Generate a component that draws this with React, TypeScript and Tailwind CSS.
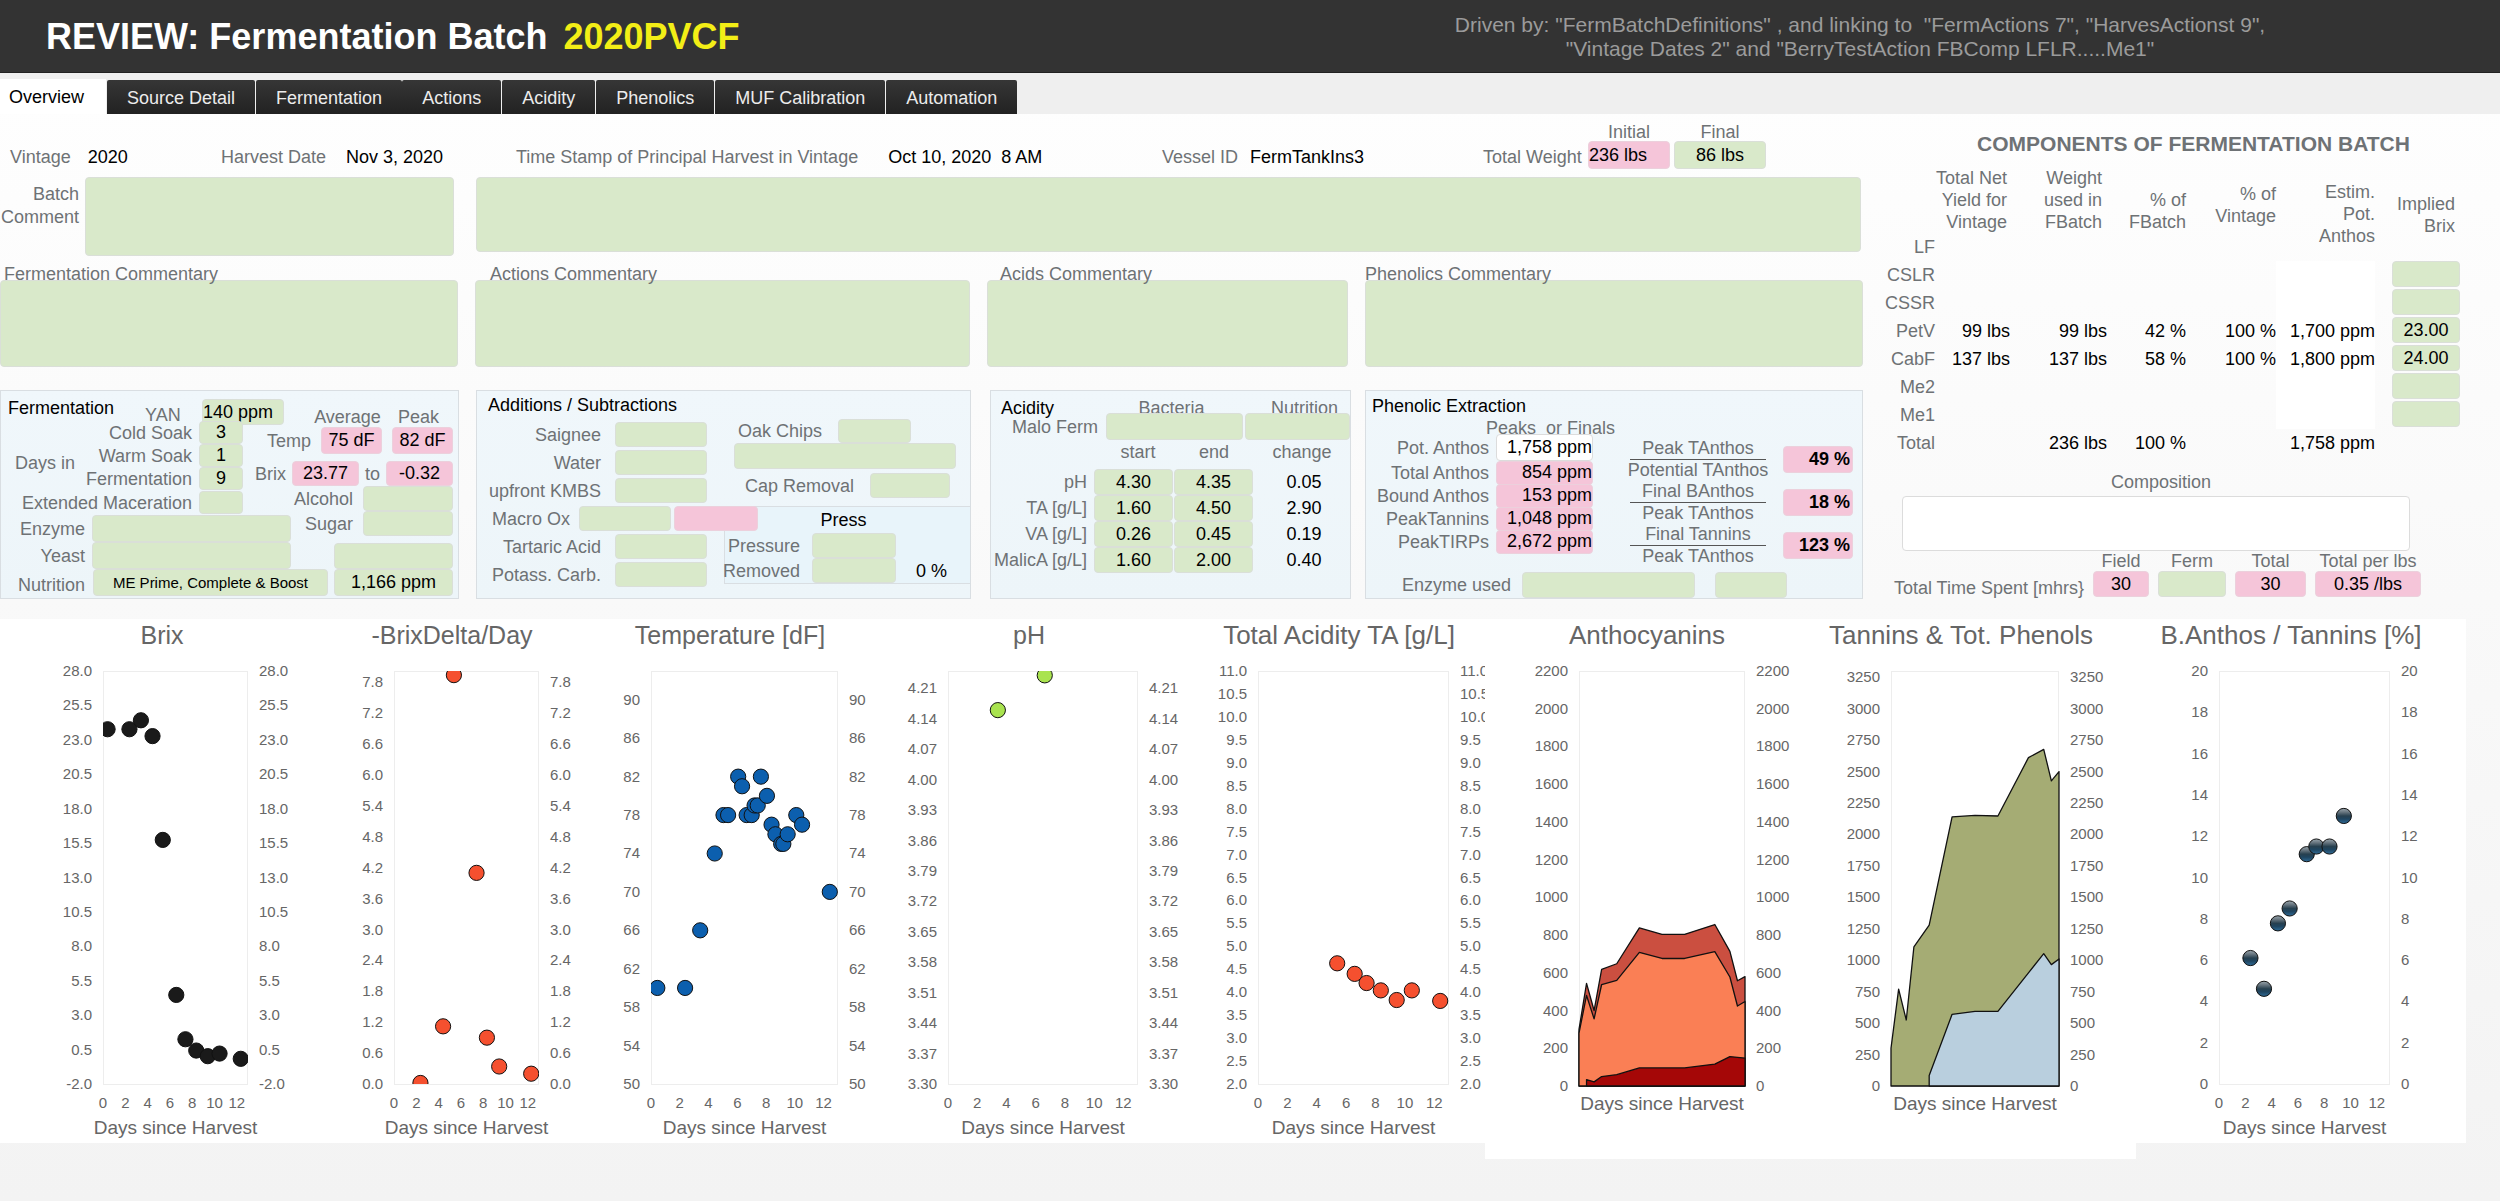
import { useId } from "react";
import type { ReactNode } from "react";
import clsx from "clsx";

type Tone = "green" | "pink" | "white";

const tones: Record<Tone, string> = {
  green: "bg-[#d9e9ca] border-[#dadfd8]",
  pink: "bg-[#f5c5d9] border-[#ecd0dc]",
  white: "bg-white border-[#dcdcdc]",
};

type BoxProps = {
  id?: string;
  label?: string;
  value?: string;
  tone?: Tone;
  className?: string;
};

function Box({ id, label, value = "", tone = "green", className }: BoxProps) {
  return (
    <input
      id={id}
      aria-label={label}
      defaultValue={value}
      className={clsx("min-w-0 shrink-0 rounded border text-black outline-none", tones[tone], className)}
    />
  );
}

function Label({ htmlFor, className, children }: { htmlFor: string; className?: string; children: ReactNode }) {
  return (
    <label htmlFor={htmlFor} className={clsx("whitespace-nowrap", className)}>
      {children}
    </label>
  );
}

function Panel({ className, children }: { className?: string; children: ReactNode }) {
  return (
    <section className={clsx("h-[209px] min-w-0 border border-[#d9dee2] bg-gradient-to-b from-[#f0f7fb] to-[#edf5f9]", className)}>
      {children}
    </section>
  );
}

/* ---------- header and tabs ---------- */

const tabs = ["Source Detail", "Fermentation", "Actions", "Acidity", "Phenolics", "MUF Calibration", "Automation"];

function Header() {
  return (
    <header className="flex h-[73px] items-center border-b border-[#222] bg-[#333] pt-0.5 pl-[46px]">
      <h1 className="flex-[1406] text-4xl font-bold whitespace-nowrap text-white">
        REVIEW: Fermentation Batch <span className="ml-1.5 text-[#f3ee16]">2020PVCF</span>
      </h1>
      <p className="flex-[816] text-center text-[21px] leading-6 whitespace-pre text-[#9b9b9b]">
        {'Driven by: "FermBatchDefinitions" , and linking to  "FermActions 7", "HarvesActionst 9",\n"Vintage Dates 2" and "BerryTestAction FBComp LFLR.....Me1"'}
      </p>
      <div className="flex-[232]" />
    </header>
  );
}

function Tabs() {
  return (
    <nav className="flex h-[41px] items-end bg-[#efefef]">
      <button type="button" className="h-[35px] bg-white pr-[22px] pl-[9px] text-black">
        Overview
      </button>
      {tabs.map((tab) => (
        <button
          key={tab}
          type="button"
          className={clsx(
            "h-[34px] rounded-t-xs bg-gradient-to-b from-[#363636] to-[#222] px-5 pt-0.5 text-[#ececec]",
            tab !== "Actions" && "ml-px"
          )}
        >
          {tab}
        </button>
      ))}
    </nav>
  );
}

/* ---------- batch information ---------- */

function Info({ label, value, gap }: { label: string; value: string; gap: string }) {
  return (
    <div className={clsx("flex leading-6 whitespace-nowrap", gap)}>
      <span>{label}</span>
      <span className="text-black">{value}</span>
    </div>
  );
}

function BatchInfo() {
  return (
    <div className="grid h-[63px] grid-cols-[211fr_295fr_646fr_321fr_380fr] items-end pb-2 pl-2.5">
      <Info label="Vintage" value="2020" gap="gap-[17px]" />
      <Info label="Harvest Date" value="Nov 3, 2020" gap="gap-5" />
      <Info label="Time Stamp of Principal Harvest in Vintage" value={"Oct 10, 2020 \u00a08 AM"} gap="gap-[30px]" />
      <Info label="Vessel ID" value="FermTankIns3" gap="gap-3" />
      <div className="flex items-end">
        <span className="w-[105px] leading-6 whitespace-nowrap">Total Weight</span>
        <div className="flex flex-col items-center">
          <Label htmlFor="w-initial" className="leading-[18px]">Initial</Label>
          <Box id="w-initial" value="236 lbs" tone="pink" className="h-7 w-[82px]" />
        </div>
        <div className="ml-1 flex flex-col items-center">
          <Label htmlFor="w-final" className="leading-[18px]">Final</Label>
          <Box id="w-final" value="86 lbs" className="h-7 w-[92px] text-center" />
        </div>
      </div>
    </div>
  );
}

function BatchComment() {
  return (
    <div className="flex items-start pr-0.5">
      <label htmlFor="batch-comment" className="w-[79px] shrink-0 pt-1.5 text-right leading-[23px]">
        Batch Comment
      </label>
      <textarea id="batch-comment" className="ml-1.5 h-[79px] min-w-0 flex-[368] resize-none rounded border border-[#dadfd8] bg-[#d9e9ca]" />
      <textarea aria-label="Harvest comment" className="ml-[22px] h-[75px] min-w-0 flex-[1385] resize-none rounded border border-[#dadfd8] bg-[#d9e9ca]" />
    </div>
  );
}

function Commentary({ title, pad }: { title: string; pad: string }) {
  const id = useId();
  return (
    <div className="flex flex-col">
      <label htmlFor={id} className={clsx("relative z-10 mt-1.5 -mb-1.5 leading-6", pad)}>
        {title}
      </label>
      <textarea id={id} className="h-[87px] w-full resize-none rounded border border-[#dadfd8] bg-[#d9e9ca]" />
    </div>
  );
}

/* ---------- fermentation ---------- */

const soaks = [
  { label: "Cold Soak", value: "3" },
  { label: "Warm Soak", value: "1" },
  { label: "Fermentation", value: "9" },
  { label: "Extended Maceration", value: "" },
];

function FermentationPanel() {
  return (
    <Panel className="pr-[5px]">
      <div className="flex">
        <div className="w-[290px] shrink-0">
          <div className="-mb-1 flex pt-2">
            <h2 className="w-[144px] pl-[7px] leading-[18px] text-black">Fermentation</h2>
            <Label htmlFor="yan" className="w-[57px] pt-1.5 leading-5">YAN</Label>
            <Box id="yan" value="140 ppm" className="h-[26px] w-[82px]" />
          </div>
          <div className="flex">
            <span className="self-center pb-2.5 pl-[14px]">Days in</span>
            <div className="-ml-16 flex flex-1 flex-col items-end pr-[48px]">
              {soaks.map((s) => (
                <div key={s.label} className="flex items-center gap-[7px] last:h-[25px]">
                  <Label htmlFor={"soak-" + s.label}>{s.label}</Label>
                  <Box id={"soak-" + s.label} value={s.value} className="h-[23px] w-11 text-center" />
                </div>
              ))}
            </div>
          </div>
          <div className="flex items-center gap-[7px]">
            <Label htmlFor="enzyme" className="w-[84px] text-right">Enzyme</Label>
            <Box id="enzyme" className="h-[27px] flex-1" />
          </div>
          <div className="flex items-center gap-[7px]">
            <Label htmlFor="yeast" className="w-[84px] text-right">Yeast</Label>
            <Box id="yeast" className="h-[27px] flex-1" />
          </div>
        </div>
        <div className="flex min-w-0 flex-1 flex-col items-end pt-4">
          <div className="flex gap-2.5 pr-1 leading-5">
            <span className="flex w-[61px] justify-center">Average</span>
            <span className="flex w-[61px] justify-center">Peak</span>
          </div>
          <div className="flex items-center gap-2.5">
            <span>Temp</span>
            <Box label="Average temperature" value="75 dF" tone="pink" className="h-[27px] w-[61px] text-center" />
            <Box label="Peak temperature" value="82 dF" tone="pink" className="h-[27px] w-[61px] text-center" />
          </div>
          <div className="mt-[7px] flex items-center gap-1.5">
            <span>Brix</span>
            <Box label="Brix from" value="23.77" tone="pink" className="h-[25px] w-[67px] text-center" />
            <span>to</span>
            <Box label="Brix to" value="-0.32" tone="pink" className="h-[25px] w-[67px] text-center" />
          </div>
          <div className="flex items-center gap-2.5">
            <Label htmlFor="alcohol">Alcohol</Label>
            <Box id="alcohol" className="h-[25px] w-[90px]" />
          </div>
          <div className="flex items-center gap-2.5">
            <Label htmlFor="sugar">Sugar</Label>
            <Box id="sugar" className="h-[25px] w-[90px]" />
          </div>
          <Box label="Yeast amount" className="mt-auto h-[26px] w-[119px]" />
        </div>
      </div>
      <div className="flex items-center">
        <Label htmlFor="nutrition" className="w-[84px] pt-1 text-right">Nutrition</Label>
        <Box id="nutrition" value="ME Prime, Complete & Boost" className="ml-2 h-[27px] flex-1 text-center text-[15px]" />
        <Box label="Nutrition amount" value="1,166 ppm" className="ml-1.5 h-[27px] w-[119px] text-center" />
      </div>
    </Panel>
  );
}

/* ---------- additions ---------- */

function AddRow({ label }: { label: string }) {
  const id = useId();
  return (
    <div className="flex h-[25px] items-center gap-[14px]">
      <Label htmlFor={id} className="w-[124px] text-right">{label}</Label>
      <Box id={id} className="h-[25px] w-[92px]" />
    </div>
  );
}

function AdditionsPanel() {
  return (
    <Panel className="ml-[17px] flex justify-between">
      <div className="flex w-[230px] shrink-0 flex-col gap-[3px]">
        <h2 className="h-7 pt-0.5 pl-[11px] leading-6 whitespace-nowrap text-black">Additions / Subtractions</h2>
        <AddRow label="Saignee" />
        <AddRow label="Water" />
        <AddRow label="upfront KMBS" />
        <div className="relative z-10 flex h-[25px] w-max items-center">
          <Label htmlFor="macro-ox" className="w-[93px] text-right">Macro Ox</Label>
          <Box id="macro-ox" className="ml-[9px] h-[25px] w-[92px]" />
          <Box label="Macro Ox total" tone="pink" className="ml-[3px] h-[25px] w-[84px]" />
        </div>
        <AddRow label="Tartaric Acid" />
        <AddRow label="Potass. Carb." />
      </div>
      <div className="w-[246px] pt-7">
        <div className="flex items-center gap-4 pl-2.5">
          <Label htmlFor="oak" className="w-[88px] text-right">Oak Chips</Label>
          <Box id="oak" className="h-6 w-[73px]" />
        </div>
        <Box label="Oak chips description" className="ml-2.5 block h-[26px] w-[222px]" />
        <div className="mt-1 flex items-center gap-4 pl-2.5">
          <Label htmlFor="cap" className="w-[120px] text-right">Cap Removal</Label>
          <Box id="cap" className="h-[25px] w-20" />
        </div>
        <div className="mt-2 border-y border-l border-[#d9dee2] bg-[#e8f4fa]">
          <h3 className="pr-10 pl-6 text-center leading-[26px] text-black">
            <span className="pl-2">Press</span>
          </h3>
          <div className="flex items-center gap-3">
            <Label htmlFor="pressure" className="w-[75px] text-right">Pressure</Label>
            <Box id="pressure" className="h-[25px] w-[84px]" />
          </div>
          <div className="flex items-center gap-3">
            <Label htmlFor="removed" className="flex w-[75px] justify-end">Removed</Label>
            <Box id="removed" className="h-[25px] w-[84px]" />
            <span className="pl-2 text-black">0 %</span>
          </div>
        </div>
      </div>
    </Panel>
  );
}

/* ---------- acidity ---------- */

const acids = [
  { label: "pH", start: "4.30", end: "4.35", change: "0.05" },
  { label: "TA [g/L]", start: "1.60", end: "4.50", change: "2.90" },
  { label: "VA [g/L]", start: "0.26", end: "0.45", change: "0.19" },
  { label: "MalicA [g/L]", start: "1.60", end: "2.00", change: "0.40" },
];

function AcidityPanel() {
  return (
    <Panel className="ml-[19px]">
      <div className="flex pt-[5px] leading-6">
        <h2 className="w-[115px] pl-2.5 text-black">Acidity</h2>
        <Label htmlFor="bacteria" className="w-[137px] pr-1.5 text-center">Bacteria</Label>
        <Label htmlFor="malo-nutrition" className="flex-1 pl-4 text-center">Nutrition</Label>
      </div>
      <div className="-mt-[7px] flex items-center gap-0.5">
        <span className="w-[113px] pr-1.5 text-right">Malo Ferm</span>
        <Box id="bacteria" className="h-[27px] w-[137px]" />
        <Box id="malo-nutrition" className="h-[27px] flex-1" />
      </div>
      <table className="w-full table-fixed text-center">
        <colgroup>
          <col className="w-[103px]" />
          <col className="w-20" />
          <col className="w-20" />
          <col />
        </colgroup>
        <thead>
          <tr className="h-[29px] align-top leading-6">
            <td />
            <th className="pl-2 font-normal">start</th>
            <th className="font-normal">end</th>
            <th className="font-normal">change</th>
          </tr>
        </thead>
        <tbody>
          {acids.map((a) => (
            <tr key={a.label} className="h-[26px]">
              <th className="pr-[7px] text-right font-normal">
                <span className="flex justify-end whitespace-nowrap">{a.label}</span>
              </th>
              <td>
                <Box label={a.label + " start"} value={a.start} className="block h-[26px] w-[79px] text-center" />
              </td>
              <td>
                <Box label={a.label + " end"} value={a.end} className="block h-[26px] w-[79px] text-center" />
              </td>
              <td className="pl-1 text-black">{a.change}</td>
            </tr>
          ))}
        </tbody>
      </table>
    </Panel>
  );
}

/* ---------- phenolics ---------- */

const extraction = [
  { label: "Total Anthos", value: "854 ppm" },
  { label: "Bound Anthos", value: "153 ppm" },
  { label: "PeakTannins", value: "1,048 ppm" },
  { label: "PeakTIRPs", value: "2,672 ppm" },
];

const ratios = [
  { top: "Peak TAnthos", bottom: "Potential TAnthos", value: "49 %" },
  { top: "Final BAnthos", bottom: "Peak TAnthos", value: "18 %" },
  { top: "Final Tannins", bottom: "Peak TAnthos", value: "123 %" },
];

function PhenolicPanel() {
  return (
    <Panel className="ml-[14px] flex flex-col">
      <h2 className="pt-[3px] pl-1.5 leading-6 text-black">Phenolic Extraction</h2>
      <div className="flex">
        <div className="w-[228px] shrink-0">
          <p className="-mb-1 pl-[120px] leading-5 whitespace-pre">{"Peaks  or Finals"}</p>
          <div className="flex items-center">
            <Label htmlFor="pot-anthos" className="w-[130px] pr-[7px] text-right">Pot. Anthos</Label>
            <Box id="pot-anthos" value="1,758 ppm" tone="white" className="relative h-[27px] w-[97px] text-right" />
          </div>
          {extraction.map((e) => (
            <div key={e.label} className="flex h-[23px] items-center">
              <Label htmlFor={"ex-" + e.label} className="w-[130px] pr-[7px] text-right">{e.label}</Label>
              <Box id={"ex-" + e.label} value={e.value} tone="pink" className="h-6 w-[97px] text-right" />
            </div>
          ))}
        </div>
        <div className="mt-5 ml-9">
          {ratios.map((r) => (
            <div key={r.top} className="flex items-center gap-[17px]">
              <div className="flex w-[136px] flex-col items-center leading-[21px]">
                <span className="w-full border-b border-[#555] text-center">{r.top}</span>
                <span className="whitespace-nowrap">{r.bottom}</span>
              </div>
              <Box label={r.top + " / " + r.bottom} value={r.value} tone="pink" className="h-[27px] w-[70px] pr-0.5 text-right font-bold" />
            </div>
          ))}
        </div>
      </div>
      <div className="mt-auto flex items-center">
        <Label htmlFor="enzyme-used" className="w-[156px] pr-[11px] text-right">Enzyme used</Label>
        <Box id="enzyme-used" className="h-[26px] w-[173px]" />
        <Box label="Enzyme amount" className="ml-5 h-[26px] w-[72px]" />
      </div>
    </Panel>
  );
}

/* ---------- components of the batch ---------- */

const components = [
  { name: "CSLR", cells: ["", "", "", "", ""], brix: "" },
  { name: "CSSR", cells: ["", "", "", "", ""], brix: "" },
  { name: "PetV", cells: ["99 lbs", "99 lbs", "42 %", "100 %", "1,700 ppm"], brix: "23.00" },
  { name: "CabF", cells: ["137 lbs", "137 lbs", "58 %", "100 %", "1,800 ppm"], brix: "24.00" },
  { name: "Me2", cells: ["", "", "", "", ""], brix: "" },
  { name: "Me1", cells: ["", "", "", "", ""], brix: "" },
];

const timeSpent: { label: string; value: string; tone: Tone; width: string }[] = [
  { label: "Field", value: "30", tone: "pink", width: "w-14" },
  { label: "Ferm", value: "", tone: "green", width: "w-[68px]" },
  { label: "Total", value: "30", tone: "pink", width: "w-[71px]" },
  { label: "Total per lbs", value: "0.35 /lbs", tone: "pink", width: "w-[106px]" },
];

function Components() {
  return (
    <section className="min-w-0 pt-[18px] pr-10 pl-5">
      <h2 className="pl-11 text-center text-[21px] leading-6 font-bold">COMPONENTS OF FERMENTATION BATCH</h2>
      <table className="mt-[11px] w-full table-fixed text-right">
        <colgroup>
          <col className="w-[52px]" />
          <col className="w-[75px]" />
          <col className="w-[97px]" />
          <col className="w-[79px]" />
          <col className="w-[90px]" />
          <col className="w-[99px]" />
          <col className="w-[85px]" />
        </colgroup>
        <thead>
          <tr className="h-[66px] align-bottom leading-[22px]">
            <td />
            <th className="pr-[3px] font-normal whitespace-nowrap">Total Net<br />Yield for<br />Vintage</th>
            <th className="pr-[5px] font-normal">Weight<br />used in<br />FBatch</th>
            <th className="font-normal">% of<br />FBatch</th>
            <th className="pb-1.5 font-normal">% of<br />Vintage</th>
            <th rowSpan={2} className="pb-[14px] font-normal">Estim.<br />Pot.<br />Anthos</th>
            <th rowSpan={2} className="pr-[5px] pb-6 font-normal">Implied<br />Brix</th>
          </tr>
          <tr className="h-7">
            <th className="font-normal">LF</th>
            <td colSpan={4} />
          </tr>
        </thead>
        <tbody>
          {components.map((c) => (
            <tr key={c.name} className="h-7">
              <th className="font-normal">{c.name}</th>
              {c.cells.map((cell, i) => (
                <td key={i} className={clsx("whitespace-nowrap text-black", i === 4 && "bg-white")}>{cell}</td>
              ))}
              <td className="pl-[17px] align-top">
                <Box label={c.name + " implied Brix"} value={c.brix} className="block h-[26px] w-full text-center" />
              </td>
            </tr>
          ))}
          <tr className="h-7">
            <th className="font-normal">Total</th>
            <td />
            <td className="text-black">236 lbs</td>
            <td className="text-black">100 %</td>
            <td />
            <td className="text-black">1,758 ppm</td>
            <td />
          </tr>
        </tbody>
      </table>
      <div className="mt-[13px] mr-[50px] ml-[19px] flex flex-col items-center">
        <Label htmlFor="composition" className="pl-2.5 leading-6">Composition</Label>
        <Box id="composition" tone="white" className="mt-0.5 h-[55px] w-full" />
      </div>
      <div className="mr-[39px] flex items-end justify-end gap-[9px]">
        <span className="leading-[18px] whitespace-nowrap">{"Total Time Spent [mhrs}"}</span>
        {timeSpent.map((t) => (
          <div key={t.label} className="flex flex-col items-center">
            <Label htmlFor={"time-" + t.label} className="leading-5">{t.label}</Label>
            <Box id={"time-" + t.label} value={t.value} tone={t.tone} className={clsx("h-[26px] text-center", t.width)} />
          </div>
        ))}
      </div>
    </section>
  );
}

/* ---------- charts ---------- */

type Point = [number, number];

type Series = { fill: string; points: Point[] };

type ChartProps = {
  title: string;
  width: number;
  titleX: number;
  titleSize?: number;
  left: number;
  right: number;
  min: number;
  max: number;
  step: number;
  digits: number;
  dots?: Series;
  areas?: Series[];
};

const TOP = 52;
const days = [0, 2, 4, 6, 8, 10, 12];

function Chart({ title, width, titleX, titleSize = 26, left, right, min, max, step, digits, dots, areas }: ChartProps) {
  const clipId = useId();
  const bottom = areas ? 467 : 465;
  const height = areas ? 540 : 524;
  const lastDay = areas ? 11 : 13;
  const sx = (d: number) => left + (d / lastDay) * (right - left);
  const sy = (v: number) => bottom - ((v - min) / (max - min)) * (bottom - TOP);
  const count = Math.floor((max - min) / step + 0.001);
  const ticks = Array.from({ length: count + 1 }, (_, i) => min + i * step);
  const line = (pts: Point[]) => pts.map(([d, v]) => sx(d) + "," + sy(v)).join(" ");

  return (
    <svg viewBox={`0 0 ${width} ${height}`} className="block w-full bg-white" role="img" aria-label={title}>
      <defs>
        <clipPath id={clipId}>
          <rect x={left} y={TOP} width={right - left} height={bottom - TOP} />
        </clipPath>
      </defs>
      <text x={titleX} y={25} textAnchor="middle" fontSize={titleSize} fill="#666">{title}</text>
      <rect x={left + 0.5} y={TOP + 0.5} width={right - left - 1} height={bottom - TOP} fill="none" stroke="#ededed" />
      <g fontSize={15} fill="#666">
        {ticks.map((t) => (
          <g key={t}>
            <text x={left - 11} y={sy(t) + 5} textAnchor="end">{t.toFixed(digits)}</text>
            <text x={right + 11} y={sy(t) + 5}>{t.toFixed(digits)}</text>
          </g>
        ))}
        {!areas && days.map((d) => (
          <text key={d} x={sx(d)} y={489} textAnchor="middle">{d}</text>
        ))}
      </g>
      <text x={(left + right) / 2} y={areas ? 491 : 515} textAnchor="middle" fontSize={19} fill="#666">
        Days since Harvest
      </text>
      {areas?.map((a) => {
        const first = a.points[0][0];
        return (
          <polygon
            key={a.fill}
            points={`${sx(first)},${bottom} ${line(a.points)} ${right},${bottom}`}
            fill={a.fill}
            stroke="#111"
            strokeWidth={1.3}
            strokeLinejoin="round"
          />
        );
      })}
      {dots && (
        <g clipPath={`url(#${clipId})`} fill={dots.fill} stroke="#111" strokeWidth={1}>
          {dots.points.map(([d, v], i) => (
            <circle key={i} cx={sx(d)} cy={sy(v)} r={7.6} />
          ))}
        </g>
      )}
    </svg>
  );
}

const brix: Point[] = [
  [0.41, 23.77], [2.37, 23.77], [3.4, 24.42], [4.44, 23.27], [5.36, 15.73], [6.57, 4.47],
  [7.39, 1.25], [8.36, 0.43], [9.39, 0.02], [10.45, 0.21], [12.35, -0.17],
];

const brixDelta: Point[] = [
  [2.37, 0.02], [4.4, 1.12], [5.37, 7.94], [7.4, 4.1], [8.33, 0.9], [9.43, 0.34], [12.3, 0.2],
];

const temperature: Point[] = [
  [0.44, 60], [2.37, 60], [3.42, 66], [4.43, 74], [5.04, 78], [5.36, 78], [6.06, 82], [6.33, 81],
  [6.65, 78], [7, 78], [7.2, 79], [7.42, 79], [7.64, 82], [8.06, 80], [8.38, 77], [8.65, 76],
  [9.05, 75], [9.2, 75], [9.5, 76], [10.1, 78], [10.5, 77], [12.43, 70],
];

const ph: Point[] = [[3.41, 4.16], [6.62, 4.24]];

const acidity: Point[] = [
  [5.39, 4.63], [6.58, 4.4], [7.39, 4.2], [8.36, 4.04], [9.44, 3.83], [10.47, 4.04], [12.4, 3.81],
];

const anthocyanins: Series[] = [
  {
    fill: "#cb4f40",
    points: [
      [0, 300], [0.5, 544], [1, 400], [1.5, 618], [2.5, 648], [4, 838], [5.5, 804], [7, 804],
      [9, 856], [10, 714], [10.5, 558], [11, 580],
    ],
  },
  {
    fill: "#fa7f55",
    points: [
      [0, 280], [0.5, 480], [1, 356], [1.5, 538], [2.5, 560], [4, 708], [5.5, 676], [7, 676],
      [9, 712], [10, 578], [10.5, 424], [11, 448],
    ],
  },
  {
    fill: "#a50707",
    points: [[0.5, 34], [1, 22], [1.5, 50], [2.5, 60], [4, 96], [7, 96], [9, 116], [10, 156], [11, 148]],
  },
];

const phenols: Series[] = [
  {
    fill: "#a5ac74",
    points: [
      [0, 300], [0.5, 770], [1, 525], [1.5, 1107], [2.5, 1280], [4, 2140], [5.5, 2152], [7, 2147],
      [9, 2611], [10, 2677], [10.5, 2426], [11, 2500],
    ],
  },
  {
    fill: "#b9cfde",
    points: [[2.5, 84], [4, 570], [5.5, 593], [7, 593], [9, 900], [10, 1052], [10.5, 965], [11, 1010]],
  },
];

const bound: Point[] = [
  [2.39, 6.1], [3.42, 4.61], [4.48, 7.78], [5.37, 8.5], [6.67, 11.13], [7.4, 11.5], [8.4, 11.5], [9.49, 12.98],
];

function Charts() {
  return (
    <section className="grid grid-cols-[305fr_305fr_292fr_298fr_285fr_326fr_325fr_330fr_34fr] items-start">
      <svg className="absolute h-0 w-0" aria-hidden="true">
        <linearGradient id="glossy" x1="0" y1="0" x2="0" y2="1">
          <stop offset="0" stopColor="#9aa6ad" />
          <stop offset="0.25" stopColor="#67757f" />
          <stop offset="0.5" stopColor="#27404f" />
          <stop offset="0.7" stopColor="#1f4560" />
          <stop offset="1" stopColor="#2f6c98" />
        </linearGradient>
      </svg>
      <Chart title="Brix" width={305} titleX={162} titleSize={25} left={103} right={248} min={-2} max={28} step={2.5} digits={1} dots={{ fill: "#1a1a1a", points: brix }} />
      <Chart title="-BrixDelta/Day" width={305} titleX={147} titleSize={25} left={89} right={234} min={0} max={8.02} step={0.6} digits={1} dots={{ fill: "#f5502f", points: brixDelta }} />
      <Chart title="Temperature [dF]" width={292} titleX={120} titleSize={25} left={41} right={228} min={50} max={93} step={4} digits={0} dots={{ fill: "#0c5fae", points: temperature }} />
      <Chart title="pH" width={298} titleX={127} titleSize={25} left={46} right={236} min={3.3} max={4.25} step={0.07} digits={2} dots={{ fill: "#a9e34f", points: ph }} />
      <Chart title="Total Acidity TA [g/L]" width={285} titleX={139} left={58} right={249} min={2} max={11} step={0.5} digits={1} dots={{ fill: "#f5502f", points: acidity }} />
      <Chart title="Anthocyanins" width={326} titleX={162} left={94} right={260} min={0} max={2200} step={200} digits={0} areas={anthocyanins} />
      <Chart title="Tannins & Tot. Phenols" width={325} titleX={150} left={80} right={248} min={0} max={3300} step={250} digits={0} areas={phenols} />
      <Chart title="B.Anthos / Tannins [%]" width={330} titleX={155} left={83} right={254} min={0} max={20} step={2} digits={0} dots={{ fill: "url(#glossy)", points: bound }} />
    </section>
  );
}

export default function App() {
  return (
    <div className="min-h-screen bg-gradient-to-b from-white to-[#f3f3f3] font-['Liberation_Sans',Arial,sans-serif] text-[18px] leading-[22px] text-[#6e7275]">
      <Header />
      <Tabs />
      <main>
        <div className="grid grid-cols-[1863fr_637fr] pb-5">
          <div className="min-w-0">
            <BatchInfo />
            <BatchComment />
            <div className="grid grid-cols-[458fr_495fr_361fr_498fr] gap-[17px]">
              <Commentary title="Fermentation Commentary" pad="pl-1" />
              <Commentary title="Actions Commentary" pad="pl-[15px]" />
              <Commentary title="Acids Commentary" pad="pl-[13px]" />
              <Commentary title="Phenolics Commentary" pad="pl-0" />
            </div>
            <div className="mt-[23px] grid grid-cols-[459fr_512fr_380fr_512fr]">
              <FermentationPanel />
              <AdditionsPanel />
              <AcidityPanel />
              <PhenolicPanel />
            </div>
          </div>
          <Components />
        </div>
        <Charts />
      </main>
    </div>
  );
}
